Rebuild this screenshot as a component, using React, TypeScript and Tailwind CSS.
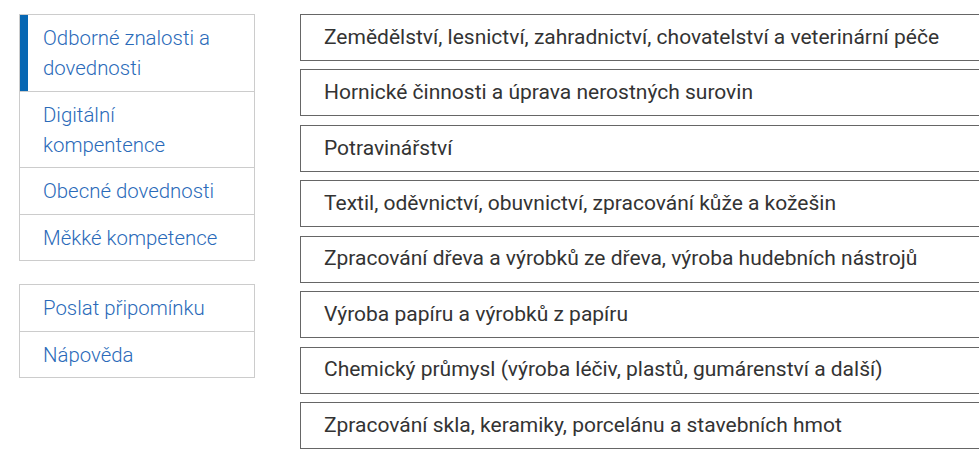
import React from 'react';

const menu = [
  { label: "Odborné znalosti a dovednosti", active: true },
  { label: "Digitální kompentence" },
  { label: "Obecné dovednosti" },
  { label: "Měkké kompetence" },
];

const extra = ["Poslat připomínku", "Nápověda"];

const fields = [
  "Zemědělství, lesnictví, zahradnictví, chovatelství a veterinární péče",
  "Hornické činnosti a úprava nerostných surovin",
  "Potravinářství",
  "Textil, oděvnictví, obuvnictví, zpracování kůže a kožešin",
  "Zpracování dřeva a výrobků ze dřeva, výroba hudebních nástrojů",
  "Výroba papíru a výrobků z papíru",
  "Chemický průmysl (výroba léčiv, plastů, gumárenství a další)",
  "Zpracování skla, keramiky, porcelánu a stavebních hmot",
];

export default function App() {
  return (
    <div className="w-[979px] h-[458px] overflow-hidden bg-white font-['Roboto',sans-serif]">
      <div className="flex items-start pt-[14px] pl-[19px]">
        <aside className="w-[236px] shrink-0 flex flex-col gap-[23px]">
          <ul className="border border-[#cccccc]">
            {menu.map((item, index) => (
              <li
                key={index}
                className={
                  "relative pl-[23px] pr-4 pt-[8px] pb-[7.5px] text-[20.4px] font-light leading-[30px] text-[#2a6ab9] " +
                  (index > 0 ? "border-t border-[#cccccc]" : "")
                }
              >
                {item.active && <span className="absolute left-0 top-0 bottom-0 w-[8px] bg-[#0767b3]" />}
                {item.label}
              </li>
            ))}
          </ul>
          <ul className="border border-[#cccccc]">
            {extra.map((label, index) => (
              <li
                key={index}
                className={
                  "pl-[23px] pr-4 pt-[8px] pb-[7.5px] text-[20.4px] font-light leading-[30px] text-[#2a6ab9] " +
                  (index > 0 ? "border-t border-[#cccccc]" : "")
                }
              >
                {label}
              </li>
            ))}
          </ul>
        </aside>
        <main className="ml-[45px] w-[760px] shrink-0 flex flex-col gap-[8.43px]">
          {fields.map((text, index) => (
            <div
              key={index}
              className="h-[47px] flex items-center border border-[#666666] pl-[23px] text-[21px] text-[#333333]"
            >
              {text}
            </div>
          ))}
        </main>
      </div>
    </div>
  );
}
